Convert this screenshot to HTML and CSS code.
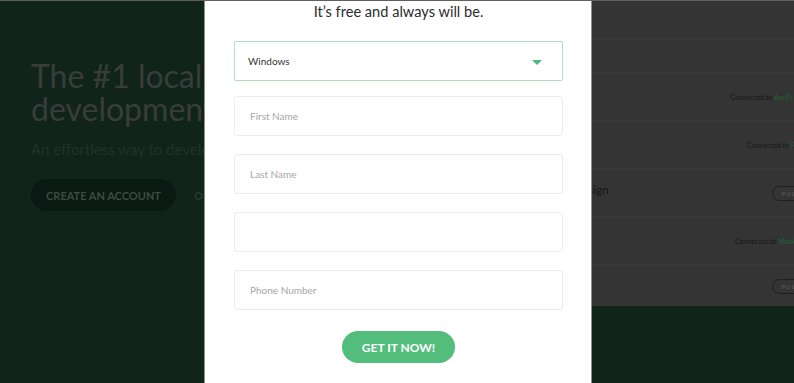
FILE: index.html
```html
<!DOCTYPE html>
<html lang="en">
<head>
<meta charset="utf-8">
<title>Sign up</title>
<link rel="stylesheet" href="styles.css">
</head>
<body>
<div class="page">
  <section class="hero">
    <div class="hero-text">
      <h1 class="hero-title">The #1 local WordPress<br>development tool</h1>
      <p class="hero-sub">An effortless way to develop WordPress sites locally.</p>
      <div class="hero-actions">
        <a class="btn-dark">CREATE AN ACCOUNT</a>
        <span class="or">OR DOWNLOAD</span>
      </div>
    </div>
    <div class="preview">
      <div class="prow prow-top"></div>
      <div class="prow prow-thin"></div>
      <div class="prow"><span class="conn">Connected to <em>April's Photography</em></span></div>
      <div class="prow"><span class="conn conn-2">Connected to <em>Facebook</em></span></div>
      <div class="prow prow-title"><span class="ptitle">Campaign Design</span><span class="pull">PULL</span></div>
      <div class="prow"><span class="conn conn-3">Connected to <em>Modern Media</em></span></div>
      <div class="prow prow-last"><span class="pull">PULL</span></div>
    </div>
  </section>

  <div class="modal">
    <h2 class="modal-title">It’s free and always will be.</h2>
    <form class="form">
      <div class="select">
        <span class="select-value">Windows</span>
        <svg class="caret" width="10" height="5" viewBox="0 0 10 5"><path d="M0 0H10L5 5Z" fill="#4cb87b"/></svg>
      </div>
      <div class="field"><span class="ph">First Name</span></div>
      <div class="field"><span class="ph">Last Name</span></div>
      <div class="field"></div>
      <div class="field"><span class="ph">Phone Number</span></div>
      <div class="submit-wrap"><span class="submit">GET IT NOW!</span></div>
    </form>
  </div>
</div>
</body>
</html>
```

FILE: styles.css
```css
* { box-sizing: border-box; }
html, body { margin: 0; padding: 0; }
body {
  width: 794px;
  height: 383px;
  overflow: hidden;
  background: #10241a;
  font-family: Lato, "Open Sans", sans-serif;
  border-top: 1px solid #5f5f5c;
}
.page {
  position: relative;
  height: 382px;
}
.hero {
  display: flex;
  align-items: flex-start;
}
.hero-text {
  flex: none;
  width: 204px;
  padding: 58px 0 0 31px;
  overflow: hidden;
  white-space: nowrap;
}
.hero-title {
  margin: 0;
  font-size: 32px;
  line-height: 33px;
  font-weight: 400;
  color: #393d3a;
}
.hero-sub {
  margin: 14px 0 0;
  font-size: 15px;
  line-height: 20px;
  color: #213328;
}
.hero-actions {
  margin-top: 20px;
  display: flex;
  align-items: center;
  gap: 18px;
}
.btn-dark {
  flex: none;
  display: inline-flex;
  align-items: center;
  justify-content: center;
  width: 145px;
  height: 32px;
  border-radius: 16px;
  background: #0a1912;
  color: #3d4b43;
  font-size: 11px;
  font-weight: 700;
}
.or {
  color: #2c3b32;
  font-size: 11px;
  font-weight: 700;
}
.preview {
  flex: 1;
  margin-left: 356px;
  height: 305px;
  background: #343434;
  overflow: hidden;
  display: flex;
  flex-direction: column;
}
.prow {
  position: relative;
  height: 48px;
  border-bottom: 1px solid #393939;
  display: flex;
  align-items: center;
  justify-content: flex-end;
  white-space: nowrap;
  font-size: 7px;
  color: #161616;
}
.prow-top { height: 39px; }
.prow-thin { height: 33px; }
.prow-last { border-bottom: 0; flex: 1; }
.conn { margin-right: -40px; }
.conn-2 { margin-right: -26px; }
.conn-3 { margin-right: -30px; }
.conn em { font-style: normal; color: #22603c; }
.prow-title { justify-content: space-between; }
.ptitle {
  font-size: 12px;
  color: #161616;
  margin-left: -43px;
  margin-top: -6px;
}
.pull {
  display: inline-flex;
  align-items: center;
  height: 15px;
  padding: 0 12px 0 9px;
  margin-right: -19px;
  margin-top: 2px;
  border: 1px solid #1e1e1e;
  border-radius: 8px;
  font-size: 6px;
  letter-spacing: 1px;
  font-weight: 700;
  color: #555;
}
.modal {
  position: absolute;
  left: 204px;
  top: -1px;
  width: 388px;
  height: 384px;
  background: #fff;
  border-left: 1px solid #8e928f;
  border-right: 1px solid #8e928f;
  border-top: 1px solid #e3e0dd;
  padding: 1px 28px 0 29px;
}
.modal-title {
  margin: 0;
  text-align: center;
  font-size: 14.6px;
  line-height: 20px;
  font-weight: 400;
  color: #2b2b2b;
}
.form {
  margin-top: 19px;
  display: flex;
  flex-direction: column;
  gap: 18px;
}
.select {
  height: 40px;
  margin-bottom: -3px;
  border: 1px solid #a9e0bf;
  border-radius: 2px;
  display: flex;
  align-items: center;
  justify-content: space-between;
  padding: 0 20px 0 13px;
}
.select-value {
  font-size: 10px;
  color: #333;
}
.caret { display: block; margin-top: 2px; }
.field {
  height: 40px;
  border: 1px solid #ececec;
  border-radius: 3px;
  display: flex;
  align-items: center;
  padding-left: 15px;
}
.ph {
  font-size: 10px;
  color: #a6a6a6;
}
.submit-wrap {
  display: flex;
  justify-content: center;
  margin-top: 3px;
}
.submit {
  display: inline-flex;
  align-items: center;
  justify-content: center;
  width: 113px;
  height: 32px;
  border-radius: 16px;
  background: #53bd7c;
  color: #fff;
  font-size: 12px;
  font-weight: 700;
}
```
